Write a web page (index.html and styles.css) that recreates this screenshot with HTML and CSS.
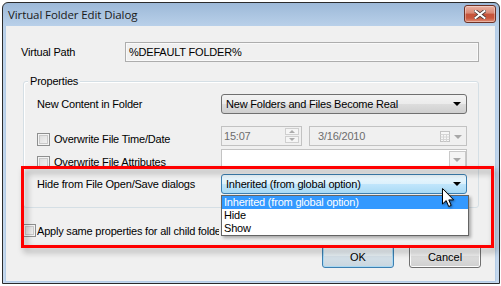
FILE: index.html
```html
<!DOCTYPE html>
<html lang="en">
<head>
  <meta charset="UTF-8">
  <title>Virtual Folder Edit Dialog</title>
  <link rel="stylesheet" href="styles.css">
</head>
<body>
  <div class="window">
    <div class="titlebar">
      <span class="title">Virtual Folder Edit Dialog</span>
      <div class="close-btn">
        <svg width="12" height="9" viewBox="0 0 12 9">
          <path d="M1.5 1 L10.5 8 M10.5 1 L1.5 8" stroke="#4a3a3a" stroke-width="3.6" stroke-linecap="square"/>
          <path d="M1.5 1 L10.5 8 M10.5 1 L1.5 8" stroke="#fff" stroke-width="2" stroke-linecap="square"/>
        </svg>
      </div>
    </div>

    <div class="client">
      <div class="path-row">
        <span class="path-label">Virtual Path</span>
        <div class="textbox">%DEFAULT FOLDER%</div>
      </div>

      <!-- Properties group -->
      <div class="group">
        <span class="group-title">Properties</span>

        <div class="prop-row row-content">
          <span class="prop-label">New Content in Folder</span>
          <div class="combo">New Folders and Files Become Real<span class="arrow"></span></div>
        </div>

        <div class="prop-row row-time">
          <span class="prop-label check-label"><span class="checkbox"></span>Overwrite File Time/Date</span>
          <div class="timebox">
            15:07
            <div class="spin">
              <span class="spin-btn"><span class="spin-up"></span></span>
              <span class="spin-btn"><span class="spin-down"></span></span>
            </div>
          </div>
          <div class="datebox">
            3/16/2010
            <svg class="cal-icon" width="10" height="11" viewBox="0 0 10 11">
              <rect x="0.5" y="0.5" width="9" height="10" fill="#f7f7f7" stroke="#c4c4c4"/>
              <path d="M0.5 3.5 H9.5 M0.5 6 H9.5 M0.5 8.5 H9.5 M3.5 3.5 V10.5 M6.5 3.5 V10.5" stroke="#d6d6d6"/>
            </svg>
            <span class="arrow arrow-off"></span>
          </div>
        </div>

        <div class="prop-row row-attr">
          <span class="prop-label check-label"><span class="checkbox"></span>Overwrite File Attributes</span>
          <div class="combo combo-off"><span class="drop-btn"><span class="arrow arrow-off"></span></span></div>
        </div>

        <div class="prop-row row-hide">
          <span class="prop-label">Hide from File Open/Save dialogs</span>
          <div class="combo combo-hot">
            Inherited (from global option)<span class="arrow"></span>
            <ul class="dropdown">
              <li class="selected">Inherited (from global option)</li>
              <li>Hide</li>
              <li>Show</li>
            </ul>
          </div>
        </div>
      </div>

      <div class="apply-row">
        <span class="checkbox"></span><span class="apply-text">Apply same properties for all child folders</span>
      </div>

      <div class="buttons">
        <button type="button" class="btn btn-default">OK</button>
        <button type="button" class="btn">Cancel</button>
      </div>
    </div>
  </div>

  <!-- annotation over the screenshot -->
  <div class="highlight"></div>
  <svg class="cursor" width="13" height="20" viewBox="0 0 13 20">
    <path d="M0.5 0.5 V16 L4.2 12.6 L6.7 18.5 L9.2 17.4 L6.8 11.9 H11.6 Z" fill="#fff" stroke="#000" stroke-linejoin="miter"/>
  </svg>
</body>
</html>
```

FILE: styles.css
```css
body {
  margin: 0;
  background-color: #fff;
  font-family: "Liberation Sans", Arial, sans-serif;
  font-size: 11px;
  letter-spacing: -0.2px;
  color: #000;
}

.window {
  box-sizing: border-box;
  width: 498px;
  height: 282px;
  margin: 2px 0 0 2px;
  padding: 0 3px 1px 2px;
  border: 1px solid #2b2b2b;
  border-radius: 6px 6px 0 0;
  background: linear-gradient(#9db9d8, #bad1ea 24px, #c4d8ee);
  display: flex;
  flex-direction: column;
}

.titlebar {
  height: 23px;
  display: flex;
  align-items: center;
}

.title {
  padding-left: 3px;
  margin-top: -1px;
  font-family: "Open Sans", sans-serif;
  font-size: 11.5px;
  letter-spacing: -0.1px;
  color: #1a1a1a;
}

.close-btn {
  box-sizing: border-box;
  width: 32px;
  height: 18px;
  margin-left: auto;
  align-self: flex-start;
  margin-top: 2px;
  border: 1px solid #6e3226;
  border-radius: 3px;
  background: linear-gradient(#ebb1a3, #d98874 45%, #c5533a 50%, #c9573d 75%, #e09078);
  box-shadow: inset 0 0 0 1px rgba(255,255,255,0.35);
  display: flex;
  align-items: center;
  justify-content: center;
}

.client {
  flex: 1;
  background-color: #f0f0f0;
  border: 1px solid #b4cce6;
  border-top: none;
}

.path-row {
  display: flex;
  align-items: center;
  margin: 16px 0 0 15px;
}

.path-label {
  width: 104px;
}

.textbox {
  box-sizing: border-box;
  width: 354px;
  height: 20px;
  padding: 0 3px;
  line-height: 18px;
  border: 1px solid #adadad;
  box-shadow: inset 0 0 0 1px #f9f9f9;
  background-color: #f0f0f0;
}

.group {
  box-sizing: border-box;
  width: 456px;
  height: 127px;
  margin: 19px 0 0 17px;
  padding: 0 10px 0 13px;
  border: 1px solid #d5dfe5;
  border-radius: 3px;
  box-shadow: inset 1px 1px 0 #fff;
}

.group-title {
  display: table;
  height: 14px;
  line-height: 14px;
  margin: -8px 0 0 -9px;
  padding: 0 2px;
  background-color: #f0f0f0;
}

.prop-row {
  display: flex;
  align-items: center;
  height: 20px;
}

.row-content { margin-top: 6px; }
.row-time { margin-top: 12px; }
.row-attr { margin-top: 3px; }
.row-hide { margin-top: 5px; }

.prop-label {
  width: 184px;
  flex-shrink: 0;
}

.check-label {
  display: flex;
  align-items: center;
  margin-top: 6px;
}

.checkbox {
  box-sizing: border-box;
  width: 13px;
  height: 13px;
  margin-right: 4px;
  border: 1px solid #8e8f8f;
  background: linear-gradient(135deg, #d9d9d9, #f6f6f6);
  box-shadow: inset 0 0 0 1px #f4f4f4, inset 0 0 0 2px #c9c9c9;
  flex-shrink: 0;
}

.combo {
  position: relative;
  box-sizing: border-box;
  width: 246px;
  height: 20px;
  padding: 0 4px;
  line-height: 18px;
  border: 1px solid #707070;
  border-radius: 3px;
  background: linear-gradient(#f3f3f3, #ebebeb 50%, #dddddd 50%, #cfcfcf);
}

.combo .arrow {
  position: absolute;
  right: 5px;
  top: 7px;
}

.arrow {
  width: 0;
  height: 0;
  border-left: 4px solid transparent;
  border-right: 4px solid transparent;
  border-top: 4px solid #000;
}

.arrow-off {
  border-top-color: #a7a7a7;
}

.combo-off {
  border-color: #c3c3c3;
  border-radius: 0;
  background: #fff;
}

.drop-btn {
  position: absolute;
  right: 0;
  top: 1px;
  box-sizing: border-box;
  width: 17px;
  height: 17px;
  border: 1px solid #c9c9c9;
  background-color: #f4f4f4;
}

.combo-off .arrow {
  right: 4px;
  top: 6px;
}

.combo-hot {
  border-color: #3c7fb1;
  background: linear-gradient(#ecf7fd, #dcf1fc 50%, #c1e6fc 50%, #a9daf5);
}

.dropdown {
  position: absolute;
  left: -1px;
  top: 20px;
  z-index: 2;
  box-sizing: border-box;
  width: 248px;
  margin: 0;
  padding: 0;
  list-style: none;
  background-color: #fff;
  border: 1px solid #646464;
  box-shadow: 2px 2px 3px rgba(0,0,0,0.3);
}

.dropdown li {
  height: 13px;
  line-height: 13px;
  padding-left: 2px;
}

.dropdown .selected {
  background-color: #3399ff;
  color: #fff;
}

.timebox,
.datebox {
  position: relative;
  box-sizing: border-box;
  height: 20px;
  line-height: 18px;
  border: 1px solid #c2c2c2;
  background-color: #f0f0f0;
  color: #6d6d6d;
}

.timebox {
  width: 81px;
  padding-left: 2px;
}

.datebox {
  width: 158px;
  margin-left: 7px;
  padding-left: 8px;
}

.spin {
  position: absolute;
  right: 2px;
  top: 1px;
  display: flex;
  flex-direction: column;
  gap: 1px;
}

.spin-btn {
  box-sizing: border-box;
  width: 14px;
  height: 7px;
  border: 1px solid #cfcfcf;
  background-color: #f5f5f5;
  display: flex;
  align-items: center;
  justify-content: center;
}

.spin-up,
.spin-down {
  width: 0;
  height: 0;
  border-left: 3px solid transparent;
  border-right: 3px solid transparent;
}

.spin-up { border-bottom: 3px solid #ababab; }
.spin-down { border-top: 3px solid #ababab; }

.cal-icon {
  position: absolute;
  right: 16px;
  top: 4px;
}

.datebox .arrow {
  position: absolute;
  right: 4px;
  top: 8px;
}

.apply-row {
  display: flex;
  align-items: center;
  margin: 16px 0 0 17px;
  height: 13px;
  white-space: nowrap;
}

.apply-row .checkbox {
  margin-right: 1px;
}

/* the open list covers the end of this label */
.apply-text {
  width: 182px;
  overflow: hidden;
}

.buttons {
  display: flex;
  justify-content: flex-end;
  gap: 15px;
  margin-top: 8px;
  padding-right: 14px;
}

.btn {
  box-sizing: border-box;
  width: 72px;
  height: 23px;
  padding: 0;
  font-family: "Liberation Sans", Arial, sans-serif;
  font-size: 11px;
  color: #000;
  border: 1px solid #707070;
  border-radius: 3px;
  background: linear-gradient(#f2f2f2, #ebebeb 50%, #dddddd 50%, #cfcfcf);
  box-shadow: inset 0 0 0 1px #fcfcfc;
}

.btn-default {
  border-color: #3c7fb1;
  background: linear-gradient(#eef3f6, #e3ecf1 50%, #d4e0e8 50%, #c9d6df);
  box-shadow: inset 0 0 0 1px #a9d8f2;
}

.highlight {
  position: absolute;
  left: 21px;
  top: 166px;
  box-sizing: border-box;
  width: 473px;
  height: 82px;
  border: 3px solid #ff0000;
  filter: drop-shadow(3px 4px 3px rgba(0,0,0,0.35));
}

.cursor {
  position: absolute;
  left: 442px;
  top: 188px;
  z-index: 3;
  filter: drop-shadow(1px 1px 1px rgba(0,0,0,0.4));
}
```
